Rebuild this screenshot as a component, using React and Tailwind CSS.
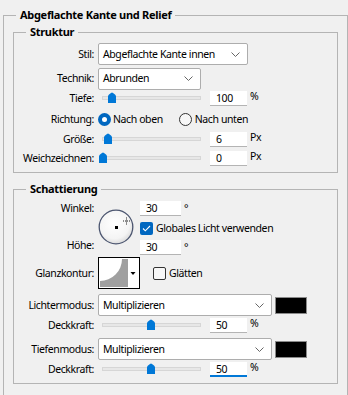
import React from "react";

function Chevron() {
    return (
        <svg width="9" height="5" viewBox="0 0 9 5" className="shrink-0">
            <polyline points="0.5,0.5 4.5,4.5 8.5,0.5" fill="none" stroke="#666" strokeWidth="1" />
        </svg>
    );
}

function Select({ text, className }) {
    return (
        <div className={`flex h-[22px] items-center justify-between rounded-[2px] border border-[#adadad] bg-white pl-[4px] pr-[7px] ${className}`}>
            <span>{text}</span>
            <Chevron />
        </div>
    );
}

function Label({ children }) {
    return <div className="w-[80px] shrink-0 text-right">{children}</div>;
}

function Thumb() {
    return (
        <svg width="10" height="11" viewBox="0 0 10 11">
            <path d="M1 4.5 Q1 3.4 2 2.6 L4 0.9 Q5 0.1 6 0.9 L8 2.6 Q9 3.4 9 4.5 V11 H1 Z" fill="#0078d7" />
        </svg>
    );
}

function Slider({ pos }) {
    return (
        <div className="relative ml-[4px] h-[18px] w-[112px] shrink-0">
            <div className="absolute left-[4px] top-[7px] h-[4px] w-[99px] border border-[#d6d6d6] bg-[#e7e7e7]" />
            <div className="absolute top-[3px]" style={{ left: pos }}>
                <Thumb />
            </div>
        </div>
    );
}

function Input({ value, focused, className = "w-[37px]" }) {
    return (
        <div
            className={`h-[15px] bg-white pl-[6px] leading-[15px] ${className} ${
                focused ? "border-b-2 border-[#0078d7]" : "border-b border-[#b4b4b4]"
            }`}
        >
            {value}
        </div>
    );
}

function Unit({ children }) {
    return <span className="ml-[3px] mt-[1px] self-start leading-[12px]">{children}</span>;
}

function SliderRow({ label, pos, value, unit, focused, className = "" }) {
    return (
        <div className={`flex h-[18px] items-center ${className}`}>
            <Label>{label}</Label>
            <Slider pos={pos} />
            <Input value={value} focused={focused} />
            <Unit>{unit}</Unit>
        </div>
    );
}

function Radio({ checked }) {
    return checked ? (
        <div className="flex h-[13px] w-[13px] shrink-0 items-center justify-center rounded-full bg-[#0067c0]">
            <div className="h-[5px] w-[5px] rounded-full bg-white" />
        </div>
    ) : (
        <div className="h-[13px] w-[13px] shrink-0 rounded-full border border-[#333] bg-[#f7f7f7]" />
    );
}

function Checkbox({ checked }) {
    return checked ? (
        <div className="flex h-[13px] w-[13px] shrink-0 items-center justify-center rounded-[2px] bg-[#0067c0]">
            <svg width="9" height="7" viewBox="0 0 9 7">
                <polyline points="1,3.5 3.3,5.8 8,1" fill="none" stroke="white" strokeWidth="1.1" />
            </svg>
        </div>
    ) : (
        <div className="h-[13px] w-[13px] shrink-0 rounded-[2px] border border-[#333] bg-[#f7f7f7]" />
    );
}

function AngleDial() {
    return (
        <svg width="36" height="36" viewBox="0 0 36 36" className="ml-[4px] shrink-0">
            <defs>
                <radialGradient id="dial" cx="45%" cy="40%" r="60%">
                    <stop offset="0%" stopColor="#ffffff" />
                    <stop offset="75%" stopColor="#f4f4f4" />
                    <stop offset="100%" stopColor="#dcdcdc" />
                </radialGradient>
            </defs>
            <circle cx="18" cy="18" r="16.8" fill="url(#dial)" stroke="#4c5670" strokeWidth="1.3" />
            <rect x="17" y="17" width="3" height="3" fill="#000" />
            <g stroke="#222" strokeWidth="1" strokeDasharray="1 1">
                <line x1="28.5" y1="8.5" x2="28.5" y2="15.5" />
                <line x1="25" y1="12" x2="32" y2="12" />
            </g>
        </svg>
    );
}

function ContourPreview() {
    return (
        <div className="ml-[4px] h-[32px] w-[42px] shrink-0 border border-black bg-white">
            <svg width="40" height="30" viewBox="0 0 40 30">
                <path d="M1 23 A22 22 0 0 0 23 1 L29 1 L29 29 L1 29 Z" fill="#a0a0a0" />
                <path d="M31.5 14 L36.5 14 L34 17 Z" fill="#000" />
            </svg>
        </div>
    );
}

export default function App() {
    return (
        <div className="h-[395px] w-[348px] overflow-hidden bg-[#f0f0f0] pl-[3px] pt-[7px] font-['Noto_Sans',sans-serif] text-[10.5px] leading-[15px] tracking-[-0.4px] text-black">
            <fieldset className="m-0 h-[420px] w-[345px] border border-[#b4b4b4] p-0">
                <legend className="ml-[12px] px-[4px] text-[11px] font-bold leading-[16px] tracking-[-0.3px]">Abgeflachte Kante und Relief</legend>

                {/* Struktur */}
                <fieldset className="m-0 ml-[9px] mt-[1px] w-[325px] border border-[#b4b4b4] p-0 pb-[5px]">
                    <legend className="ml-[12px] px-[4px] text-[11px] font-bold leading-[16px] tracking-[-0.3px]">Struktur</legend>

                    <div className="mt-[3px] flex h-[22px] items-center">
                        <Label>Stil:</Label>
                        <Select text="Abgeflachte Kante innen" className="ml-[4px] w-[150px]" />
                    </div>
                    <div className="mt-[3px] flex h-[21px] items-center">
                        <Label>Technik:</Label>
                        <Select text="Abrunden" className="ml-[4px] h-[21px] w-[103px]" />
                    </div>
                    <SliderRow label="Tiefe:" pos={9} value="100" unit="%" />
                    <div className="mt-[3px] flex h-[18px] items-center">
                        <Label>Richtung:</Label>
                        <div className="ml-[4px] flex items-center gap-[2px]">
                            <Radio checked />
                            <span>Nach oben</span>
                        </div>
                        <div className="ml-[16px] flex items-center gap-[3px]">
                            <Radio />
                            <span>Nach unten</span>
                        </div>
                    </div>
                    <SliderRow label="Größe:" pos={5} value="6" unit="Px" className="mt-[2px]" />
                    <SliderRow label="Weichzeichnen:" pos={0} value="0" unit="Px" className="mt-[1px]" />
                </fieldset>

                {/* Schattierung */}
                <fieldset className="m-0 ml-[9px] mt-[8px] w-[325px] border border-[#b4b4b4] p-0 pb-[5px]">
                    <legend className="ml-[12px] px-[4px] text-[11px] font-bold leading-[16px] tracking-[-0.3px]">Schattierung</legend>

                    <div className="mt-[4px] flex h-[52px] items-center">
                        <div className="flex h-full w-[80px] shrink-0 flex-col justify-between text-right">
                            <span>Winkel:</span>
                            <span>Höhe:</span>
                        </div>
                        <AngleDial />
                        <div className="ml-[6px] flex h-full flex-col">
                            <div className="flex">
                                <Input value="30" className="w-[41px]" />
                                <Unit>°</Unit>
                            </div>
                            <div className="mt-[5px] flex items-center gap-[3px]">
                                <Checkbox checked />
                                <span>Globales Licht verwenden</span>
                            </div>
                            <div className="mt-[4px] flex">
                                <Input value="30" className="w-[41px]" />
                                <Unit>°</Unit>
                            </div>
                        </div>
                    </div>

                    <div className="mt-[4px] flex h-[32px] items-center">
                        <Label>Glanzkontur:</Label>
                        <ContourPreview />
                        <div className="ml-[13px] flex items-center gap-[3px]">
                            <Checkbox />
                            <span>Glätten</span>
                        </div>
                    </div>

                    <div className="mt-[5px] flex h-[22px] items-center">
                        <Label>Lichtermodus:</Label>
                        <Select text="Multiplizieren" className="ml-[4px] w-[174px]" />
                        <div className="ml-[3px] h-[17px] w-[32px] border border-[#8a8a8a] bg-black" />
                    </div>
                    <SliderRow label="Deckkraft:" pos={48} value="50" unit="%" />

                    <div className="mt-[4px] flex h-[22px] items-center">
                        <Label>Tiefenmodus:</Label>
                        <Select text="Multiplizieren" className="ml-[4px] w-[174px]" />
                        <div className="ml-[3px] h-[17px] w-[32px] border border-[#8a8a8a] bg-black" />
                    </div>
                    <SliderRow label="Deckkraft:" pos={48} value="50" unit="%" focused />
                </fieldset>
            </fieldset>
        </div>
    );
}
